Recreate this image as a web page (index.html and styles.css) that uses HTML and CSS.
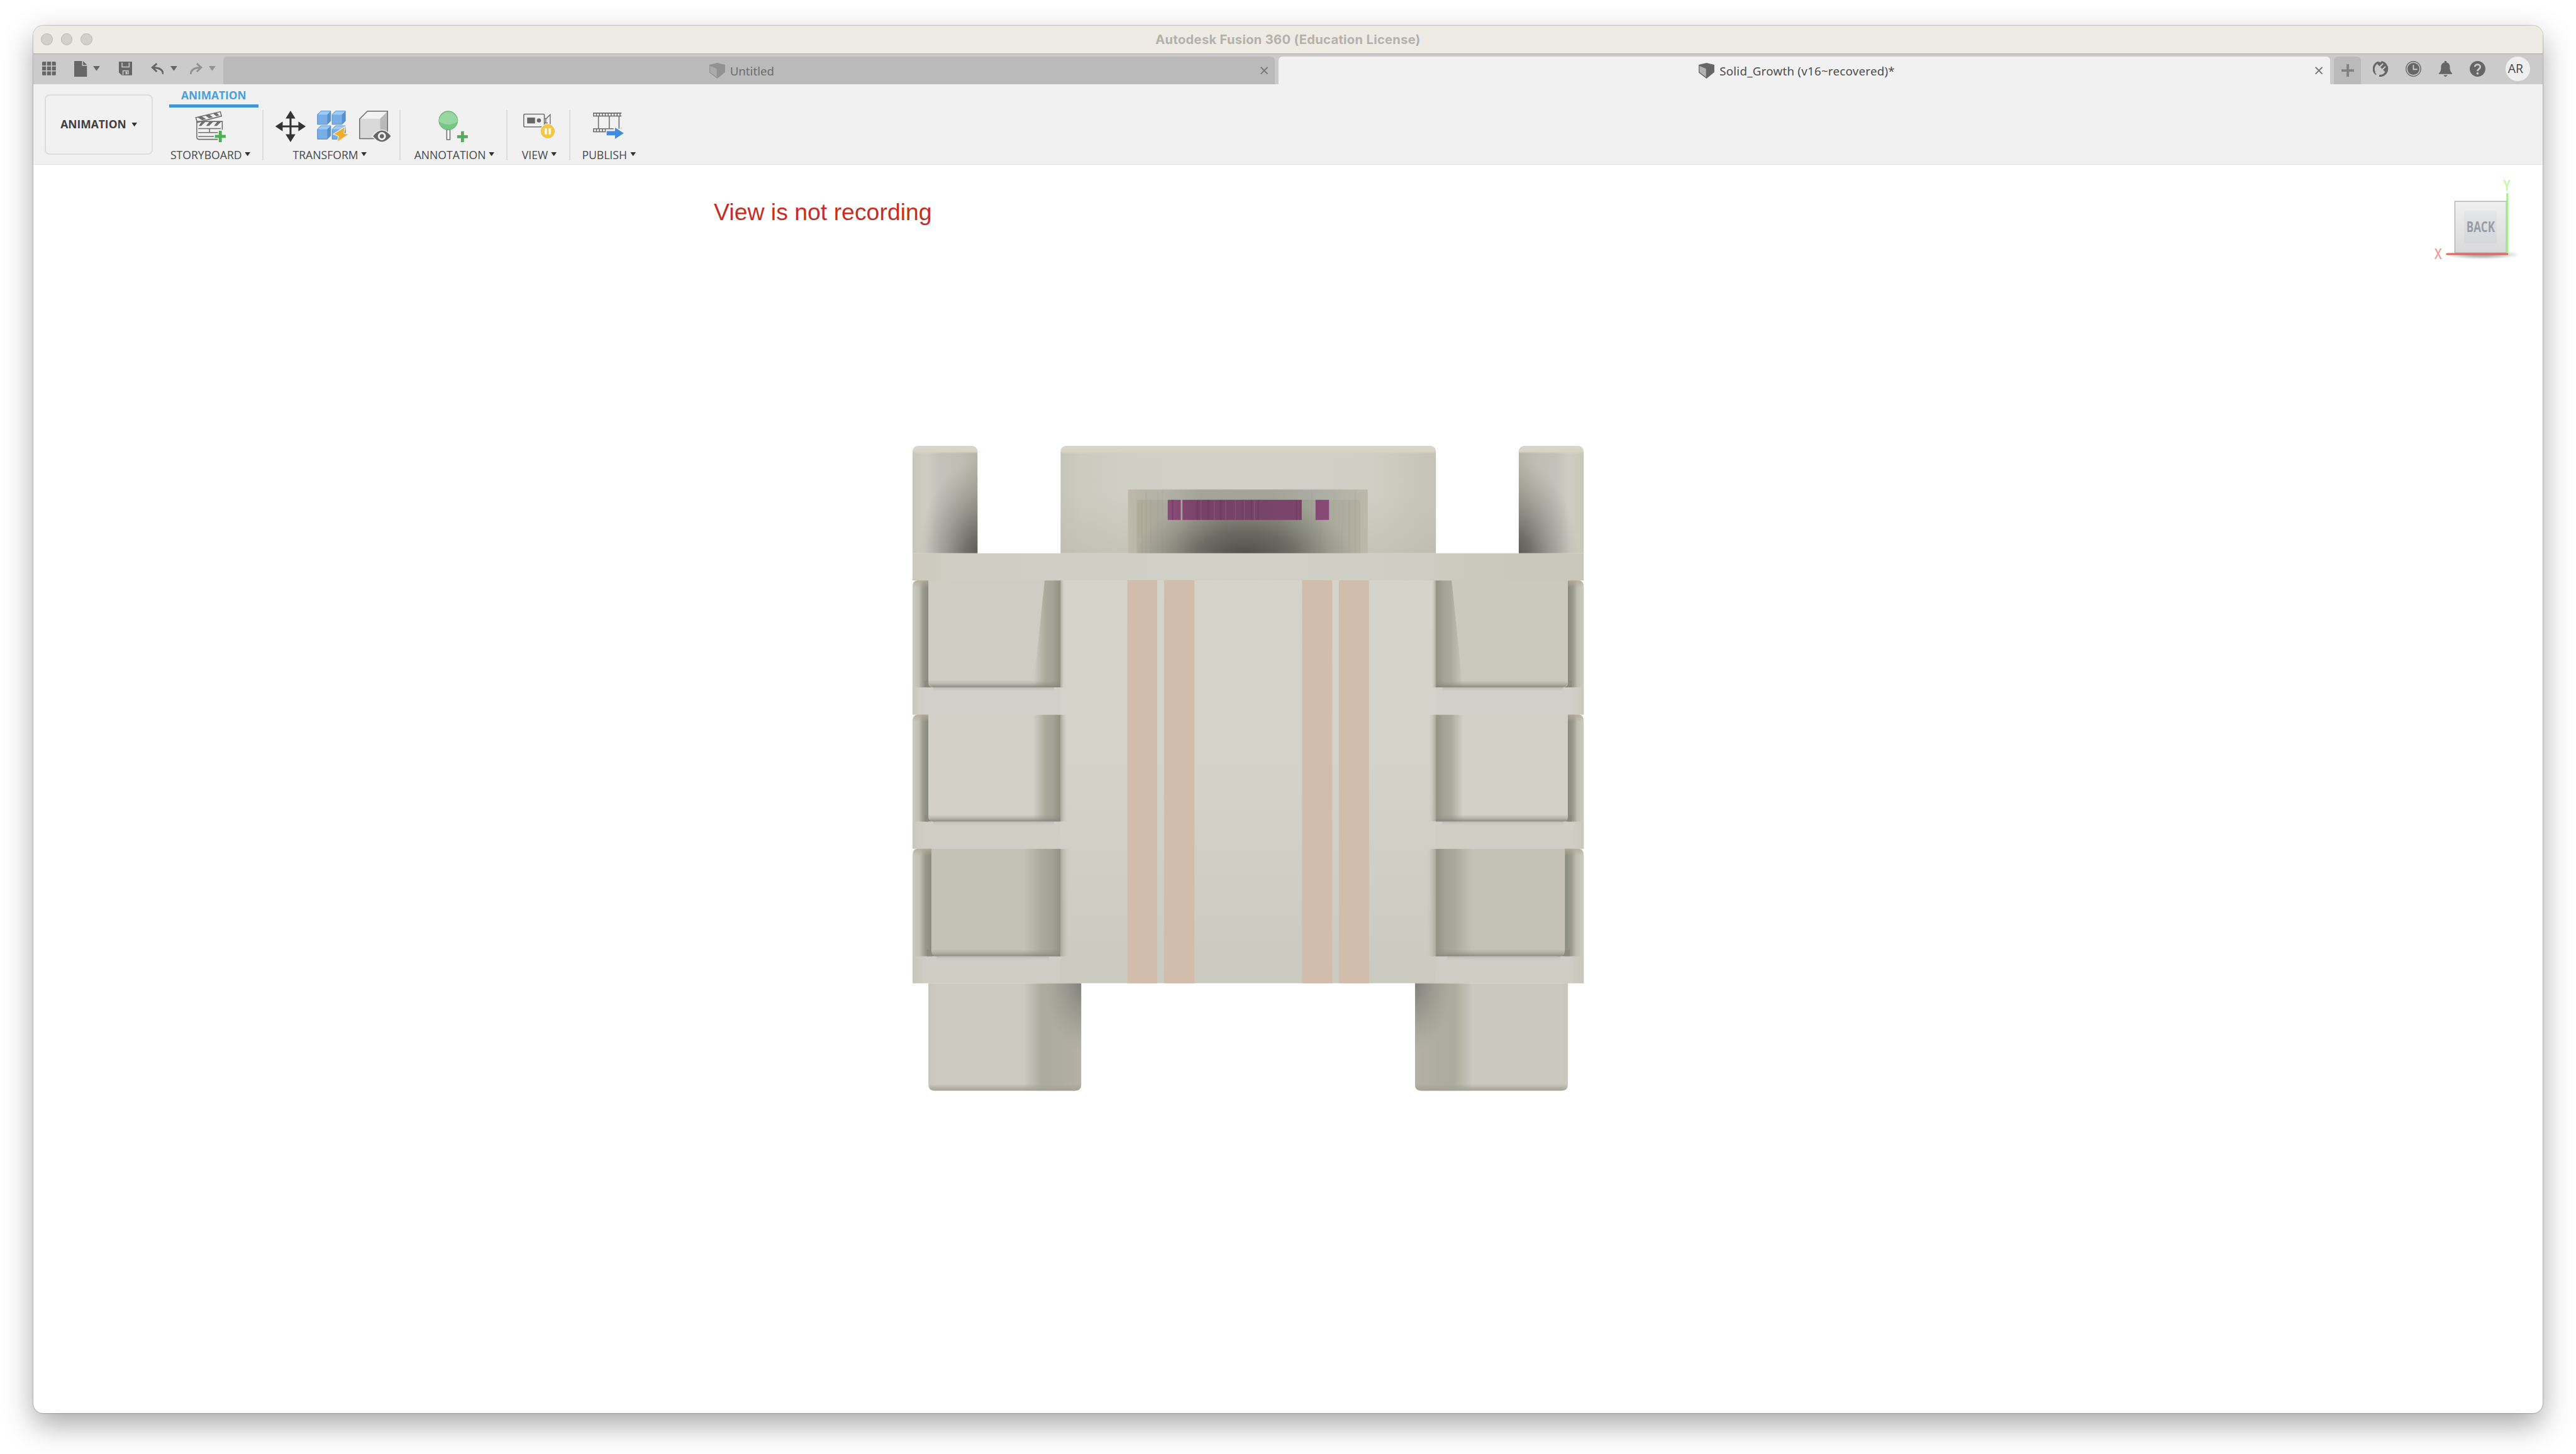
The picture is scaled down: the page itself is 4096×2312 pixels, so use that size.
FILE: index.html
```html
<!DOCTYPE html>
<html lang="en">
<head>
<meta charset="utf-8">
<title>Autodesk Fusion 360 (Education License)</title>
<link rel="stylesheet" href="styles.css">
</head>
<body>
<svg class="defs" aria-hidden="true">
  <symbol id="caret" viewBox="0 0 14 10"><path d="M0 0H14L7 10Z" fill="currentColor"/></symbol>
  <symbol id="close" viewBox="0 0 16 16"><path d="M1 1L15 15M15 1L1 15" stroke="currentColor" stroke-width="2.4" fill="none"/></symbol>
  <symbol id="doc-cube" viewBox="0 0 32 32">
    <path d="M0 4L16 0L32 4V19L16 32L0 20Z" fill="var(--cube-dark)"/>
    <path d="M1.5 6L15 12V29L1.5 19Z" fill="var(--cube-light)"/>
  </symbol>
</svg>

<main class="window">
  <header class="titlebar">
    <div class="lights"><i></i><i></i><i></i></div>
    <h1>Autodesk Fusion 360 (Education License)</h1>
  </header>

  <nav class="appbar">
    <div class="quick">
      <svg class="q-grid" viewBox="0 0 28 28"><path fill="currentColor" d="M0 2Q0 0 2 0H8V8H0ZM10 0H18V8H10ZM20 0H26Q28 0 28 2V8H20ZM0 10H8V18H0ZM10 10H18V18H10ZM20 10H28V18H20ZM0 20H8V28H2Q0 28 0 26ZM10 20H18V28H10ZM20 20H28V26Q28 28 26 28H20Z"/></svg>
      <svg class="q-doc" viewBox="0 0 26 32"><path fill="currentColor" d="M1 0H16V10H26V31Q26 32 25 32H1Q0 32 0 31V1Q0 0 1 0ZM18 0L26 8H18Z"/></svg>
      <svg class="q-caret near" viewBox="0 0 14 10"><use href="#caret"/></svg>
      <svg class="q-save" viewBox="0 0 28 28"><path fill="currentColor" fill-rule="evenodd" d="M1 0H27Q28 0 28 1V27Q28 28 27 28H6L0 22V1Q0 0 1 0ZM5.5 2V12H22V2H20V10H7.500V2ZM7.500 28V17.500H20V26H18V19.500H9.500V26Z"/><path d="M13.500 20H17V26H13.500Z" fill="#cbcbcb"/></svg>
      <svg class="q-undo" viewBox="0 0 26 24"><path d="M25 24C25 14 18 9.500 4 9.500M12 1.500L3 9.500L12 18" fill="none" stroke="currentColor" stroke-width="3.800"/></svg>
      <svg class="q-caret mid" viewBox="0 0 14 10"><use href="#caret"/></svg>
      <svg class="q-redo" viewBox="0 0 26 24"><path d="M1.500 24C1.500 14 8 9.500 22 9.500M14 1.500L23 9.500L14 18" fill="none" stroke="currentColor" stroke-width="3.800"/></svg>
      <svg class="q-caret near faded" viewBox="0 0 14 10"><use href="#caret"/></svg>
    </div>
    <div class="tab">
      <div class="tab-name"><svg class="cube" viewBox="0 0 32 32"><use href="#doc-cube"/></svg><span>Untitled</span></div>
      <svg class="close" viewBox="0 0 16 16"><use href="#close"/></svg>
    </div>
    <div class="tab active">
      <div class="tab-name"><svg class="cube" viewBox="0 0 32 32"><use href="#doc-cube"/></svg><span>Solid_Growth (v16~recovered)*</span></div>
      <svg class="close" viewBox="0 0 16 16"><use href="#close"/></svg>
    </div>
    <div class="new-tab"><svg viewBox="0 0 26 26"><path d="M0 13H26M13 0V26" stroke="currentColor" stroke-width="5"/></svg></div>
    <div class="status">
      <svg viewBox="0 0 32 32"><path d="M17 2A14 14 0 0 1 13 30M7 27A14 14 0 0 1 12 2.500" fill="none" stroke="currentColor" stroke-width="4"/><path d="M12 2L24 3L31 12L30 20L25 24L8 8Z" fill="currentColor"/><path d="M9 8L23 22C19 25 14 25 11 23L7 25L6 23L8 20C6 16 7 12 9 8ZM15 11L20 6M20 17L25 12" fill="#cbcbcb" stroke="#cbcbcb" stroke-width="2.600" stroke-linecap="round"/></svg>
      <svg viewBox="0 0 32 32"><circle cx="16" cy="16" r="15" fill="none" stroke="currentColor" stroke-width="1.800"/><circle cx="16" cy="16" r="12.300" fill="currentColor"/><path d="M16 8V17H24" fill="none" stroke="#cbcbcb" stroke-width="2.400"/></svg>
      <svg viewBox="0 0 32 32"><path fill="currentColor" d="M14 0H18V3C23 4 25 8 25 12C25 19 26 22 29.500 25V26.500H2.500V25C6 22 7 19 7 12C7 8 9 4 14 3ZM12 29H20Q19 32 16 32T12 29Z"/></svg>
      <svg viewBox="0 0 32 32"><circle cx="16" cy="16" r="16" fill="currentColor"/><path d="M10.500 12C10.500 5.500 21.500 5.500 21.500 12C21.500 16.500 16 16 16 21" fill="none" stroke="#cbcbcb" stroke-width="3.400"/><circle cx="16" cy="25.500" r="2.300" fill="#cbcbcb"/></svg>
      <span class="avatar">AR</span>
    </div>
  </nav>

  <section class="ribbon">
    <button class="workspace">ANIMATION<svg class="menu" viewBox="0 0 14 10"><use href="#caret"/></svg></button>
    <div class="panel storyboard">
      <div class="ribbon-tab">ANIMATION</div>
      <div class="tools"><svg class="tool" viewBox="0 0 64 64">
        <path d="M3 14L53 2L55.500 11L6 24Z" fill="#f1f1f1" stroke="#6e6e6e" stroke-width="2"/>
        <path d="M6 13L14 11L24 17L16 19.500ZM22 9.500L30 7.500L38 13.500L30 15.500ZM38 5.500L45 4L51 9.500L45 11.500Z" fill="#6e6e6e"/>
        <path d="M57 39V22H5V54Q5 58.500 9.500 58.500H48" fill="none" stroke="#6e6e6e" stroke-width="2"/>
        <path d="M15 22L9 31L14 31L23 22ZM31 22L24 31L30 31L39 22ZM47 22L40 31L46 31L55 22Z" fill="#6e6e6e"/>
        <path d="M8 36.500H54M8 44.500H48M8 52.500H40M31 36V45" stroke="#6e6e6e" stroke-width="2"/>
        <path d="M53 41V64M42 52.500H64" stroke="#4fae56" stroke-width="6"/></svg></div>
      <div class="label">STORYBOARD<svg class="menu" viewBox="0 0 14 10"><use href="#caret"/></svg></div>
    </div>
    <div class="panel transform">
      <div class="tools">
        <svg class="tool move" viewBox="0 0 64 64"><path fill="#333" d="M32 0L42 16H34V30H48V22L63 32L48 42V34H34V48H42L32 64L22 48H30V34H16V42L1 32L16 22V30H30V16H22Z"/></svg>
        <svg class="tool" viewBox="0 0 64 64">
          <g id="block" stroke-width="1"><path d="M1 8L8 0.800H28V21L21 28H1Z" fill="#78aee5" stroke="#3f78b5"/><path d="M1.500 8L8.500 1.300H27.500L21 8Z" fill="#9bccf8"/><path d="M21 8L27.500 1.500V21L21 27.500Z" fill="#568fc9"/></g>
          <use href="#block" x="30"/><use href="#block" y="30"/><use href="#block" x="30" y="30"/>
          <path d="M58 32L33 48L44 52L41 64L65 48L55 46Z" fill="#f2ab2d" stroke="#f1f1f1" stroke-width="1.500"/></svg>
        <svg class="tool" viewBox="0 0 64 64"><path d="M1 17L17 1H58V43L44 57H1Z" fill="#d9d9d9"/><path d="M2.500 16.500L17.500 2H57L43 16.500Z" fill="#f3f3f3"/><path d="M43 16.500L57 2.500V57H43Z" fill="#b9b9b9"/><path d="M1 17L17 1H58V57H1Z" fill="none" stroke="#6e6e6e" stroke-width="2"/><path d="M50 44H60V60H50Z" fill="#f1f1f1"/>
          <path d="M27 52Q46.500 27 66 52Q46.500 77 27 52Z" fill="#666" stroke="#f1f1f1" stroke-width="2"/><circle cx="46.500" cy="52" r="6.300" fill="#666" stroke="#f1f1f1" stroke-width="4"/></svg>
      </div>
      <div class="label">TRANSFORM<svg class="menu" viewBox="0 0 14 10"><use href="#caret"/></svg></div>
    </div>
    <div class="panel annotation">
      <div class="tools"><svg class="tool" viewBox="0 0 64 64"><path d="M18.500 38H25V59H18.500Z" fill="#fff" stroke="#6e6e6e" stroke-width="2"/><circle cx="21.500" cy="20" r="19.300" fill="#78c684" stroke="#5fa96b"/><path d="M2.500 22A19 19 0 1 1 40.500 22Q22 34 2.500 22Z" fill="#97d8a2"/><path d="M50.500 42V64M39.500 53H61.500" stroke="#4fae56" stroke-width="6"/></svg></div>
      <div class="label">ANNOTATION<svg class="menu" viewBox="0 0 14 10"><use href="#caret"/></svg></div>
    </div>
    <div class="panel view">
      <div class="tools"><svg class="tool" viewBox="0 0 64 64"><rect x="1" y="7" width="42" height="26" rx="2" fill="#f1f1f1" stroke="#6e6e6e" stroke-width="2"/><rect x="8" y="14" width="16" height="12" fill="#666"/><circle cx="32" cy="20" r="4.200" fill="#666"/><path d="M43 16H47L55 8V34M43 25H50M46 16V25" fill="none" stroke="#6e6e6e" stroke-width="1.800"/><circle cx="50" cy="42" r="15.500" fill="#f1f1f1"/><circle cx="50" cy="42" r="13.700" fill="#f8c840" stroke="#e5b63a"/><path d="M46 36V48M54 36V48" stroke="#fff" stroke-width="4.200"/></svg></div>
      <div class="label">VIEW<svg class="menu" viewBox="0 0 14 10"><use href="#caret"/></svg></div>
    </div>
    <div class="panel publish">
      <div class="tools"><svg class="tool" viewBox="0 0 64 64"><path d="M0 5H58M0 11H58M0 37H42M0 43H26M1 4V12M1 36V44M57 36H58M11 12V37M33 12V37M53 12V37" fill="none" stroke="#6e6e6e" stroke-width="2"/><path d="M7 4V12M13 4V12M19 4V12M25 4V12M31 4V12M37 4V12M43 4V12M49 4V12M55 4V12M7 36V44M13 36V44M19 36V44M25 36V44" stroke="#6e6e6e" stroke-width="2"/><path d="M27 41H44V33L64 46L44 59V51H27Z" fill="#4289e0" stroke="#f1f1f1" stroke-width="1.500"/></svg></div>
      <div class="label">PUBLISH<svg class="menu" viewBox="0 0 14 10"><use href="#caret"/></svg></div>
    </div>
  </section>

  <section class="viewport">
    <p class="notice">View is not recording</p>

    <svg class="model" viewBox="1850 900 1392 1340">
      <defs>
        <linearGradient id="bodyV" x2="0" y2="1"><stop offset="0" stop-color="#d4d4cb"/><stop offset=".45" stop-color="#d3d3ca"/><stop offset="1" stop-color="#cbcac1"/></linearGradient>
        <linearGradient id="edge"><stop offset="0" stop-color="#c9c7b9"/><stop offset="1" stop-color="#c9c7b9" stop-opacity="0"/></linearGradient>
        <linearGradient id="topLip" x2="0" y2="1"><stop offset="0" stop-color="#d9d6c8"/><stop offset=".7" stop-color="#d6d4c7"/><stop offset="1" stop-color="#d6d4c7" stop-opacity="0"/></linearGradient>
        <linearGradient id="pillar"><stop offset="0" stop-color="#c7c7b9"/><stop offset=".22" stop-color="#cdcdc4"/><stop offset=".42" stop-color="#c2c2ba"/><stop offset=".75" stop-color="#bfbeb4"/><stop offset="1" stop-color="#b5b3a6"/></linearGradient>
        <radialGradient id="pillarDark" gradientUnits="userSpaceOnUse" cx="0" cy="0" r="1" gradientTransform="translate(2004 1150) scale(132 215)"><stop offset="0" stop-color="#504e4b"/><stop offset=".3" stop-color="#5c5b56" stop-opacity=".78"/><stop offset=".6" stop-color="#6c6b64" stop-opacity=".42"/><stop offset="1" stop-color="#84847b" stop-opacity="0"/></radialGradient>
        <linearGradient id="cabin"><stop offset="0" stop-color="#c5c5b9"/><stop offset=".05" stop-color="#cdcabf"/><stop offset=".16" stop-color="#cfcfc5"/><stop offset=".5" stop-color="#d0d0c7"/><stop offset=".83" stop-color="#cfcfc5"/><stop offset=".95" stop-color="#c8c6b9"/><stop offset="1" stop-color="#c6c4b6"/></linearGradient>
        <linearGradient id="cabinV" x2="0" y2="1"><stop offset=".4" stop-color="#b9b8aa" stop-opacity="0"/><stop offset="1" stop-color="#b9b8aa" stop-opacity=".5"/></linearGradient>
        <linearGradient id="recess"><stop offset="0" stop-color="#bdbaab"/><stop offset=".07" stop-color="#b5b4a5"/><stop offset=".16" stop-color="#b2b2a8"/><stop offset=".3" stop-color="#a3a49a"/><stop offset=".6" stop-color="#a2a399"/><stop offset=".8" stop-color="#acada4"/><stop offset=".93" stop-color="#b5b5a7"/><stop offset="1" stop-color="#bcb9aa"/></linearGradient>
        <linearGradient id="recessIn"><stop offset="0" stop-color="#aeaa9a"/><stop offset=".2" stop-color="#a3a396"/><stop offset=".4" stop-color="#8a8b80"/><stop offset=".62" stop-color="#8a8b80"/><stop offset=".85" stop-color="#a7a89a"/><stop offset="1" stop-color="#b1ad9d"/></linearGradient>
        <radialGradient id="recessDark" gradientUnits="userSpaceOnUse" cx="0" cy="0" r="1" gradientTransform="translate(2538 1138) scale(225 125)"><stop offset="0" stop-color="#4c4c46"/><stop offset=".45" stop-color="#5c5c54" stop-opacity=".72"/><stop offset=".75" stop-color="#6a6a61" stop-opacity=".3"/><stop offset="1" stop-color="#77776e" stop-opacity="0"/></radialGradient>
        <linearGradient id="violet"><stop offset="0" stop-color="#8a4c79"/><stop offset=".2" stop-color="#784265"/><stop offset=".5" stop-color="#744466"/><stop offset=".8" stop-color="#7c456b"/><stop offset="1" stop-color="#8a4a79"/></linearGradient>
        <linearGradient id="plate"><stop offset="0" stop-color="#ccc9bb"/><stop offset=".06" stop-color="#cecec4"/><stop offset=".5" stop-color="#d0d0c6"/><stop offset=".76" stop-color="#cfcec5"/><stop offset=".82" stop-color="#cbc9bc"/><stop offset="1" stop-color="#c9c7ba"/></linearGradient>
        <linearGradient id="rail"><stop offset="0" stop-color="#cbcbc0"/><stop offset=".4" stop-color="#bebeb2"/><stop offset=".65" stop-color="#9b9b8e"/><stop offset="1" stop-color="#898a7e"/></linearGradient>
        <linearGradient id="railTop" x2="0" y2="1"><stop offset="0" stop-color="#b5ac99" stop-opacity=".8"/><stop offset="1" stop-color="#b5ac99" stop-opacity="0"/></linearGradient>
        <linearGradient id="side" gradientUnits="userSpaceOnUse" x1="2108" x2="2163"><stop offset="0" stop-color="#a7a899" stop-opacity="0"/><stop offset=".45" stop-color="#a9aa9b"/><stop offset=".72" stop-color="#a3a396"/><stop offset="1" stop-color="#929184"/></linearGradient>
        <linearGradient id="sideWide" gradientUnits="userSpaceOnUse" x1="2088" x2="2163"><stop offset="0" stop-color="#a9aa9b" stop-opacity="0"/><stop offset=".5" stop-color="#a9aa9b"/><stop offset=".75" stop-color="#a3a396"/><stop offset="1" stop-color="#919185"/></linearGradient>
        <linearGradient id="spill"><stop offset="0" stop-color="#aaa598"/><stop offset="1" stop-color="#cfcec4" stop-opacity="0"/></linearGradient>
        <linearGradient id="foot" x2="0" y2="1"><stop offset="0" stop-color="#8d8a82" stop-opacity="0"/><stop offset=".5" stop-color="#8d8a82" stop-opacity=".35"/><stop offset="1" stop-color="#85827a" stop-opacity=".9"/></linearGradient>
        <linearGradient id="under" x2="0" y2="1"><stop offset="0" stop-color="#aaa69c" stop-opacity=".5"/><stop offset="1" stop-color="#c7c5bb" stop-opacity="0"/></linearGradient>
        <linearGradient id="legSide" gradientUnits="userSpaceOnUse" x1="2088" x2="2206"><stop offset="0" stop-color="#abac9d" stop-opacity="0"/><stop offset=".32" stop-color="#abac9d"/><stop offset=".6" stop-color="#aeac9f"/><stop offset="1" stop-color="#b5b2a5"/></linearGradient>
        <radialGradient id="legDark" gradientUnits="userSpaceOnUse" cx="0" cy="0" r="1" gradientTransform="translate(2212 1995) scale(80 150)"><stop offset="0" stop-color="#777773"/><stop offset=".5" stop-color="#85847d" stop-opacity=".5"/><stop offset="1" stop-color="#8f8e86" stop-opacity="0"/></radialGradient>
        <linearGradient id="legFoot" x2="0" y2="1"><stop offset="0" stop-color="#a3a297" stop-opacity="0"/><stop offset="1" stop-color="#a3a297"/></linearGradient>
        <g id="half">
          <path d="M1861.500 1128V923Q1861.500 909 1875.500 909H1980Q1994 909 1994 923V1128Z" fill="url(#pillar)"/>
          <path d="M1870 923H1994V1128H1870Z" fill="url(#pillarDark)"/>
          <path d="M1861.500 925V923Q1861.500 909 1875.500 909H1980Q1994 909 1994 923V925Z" fill="url(#topLip)"/>
          <path d="M1894 2005H2205.500V2212Q2205.500 2224 2193.500 2224H1906Q1894 2224 1894 2212Z" fill="var(--leg)"/>
          <path d="M2088 2005H2205.500V2212Q2205.500 2224 2193.500 2224H2088Z" fill="url(#legSide)"/>
          <path d="M2120 2005H2205.500V2150H2120Z" fill="url(#legDark)"/>
          <rect x="1894" y="2005" width="16" height="206" fill="url(#edge)"/>
          <path d="M1894 2210H2205.500V2212Q2205.500 2224 2193.500 2224H1906Q1894 2224 1894 2212Z" fill="url(#legFoot)"/>
        </g>
        <g id="bays">
          <path d="M1880 1401.500H2163V1457.500H1880ZM1880 1675H2163V1731H1880ZM1880 1950H2163V2005H1880Z" fill="#cfccc4" opacity=".65"/>
          <path d="M1861.500 1401.500H1885V1457.500H1861.500ZM1861.500 1675H1885V1731H1861.500ZM1861.500 1950H1885V2005H1861.500Z" fill="url(#edge)"/>
          <g id="railPart"><path d="M1861.500 1183.500H1894V1401.500H1861.500Z" fill="url(#rail)"/><rect x="1861.500" y="1183.500" width="32.500" height="14" fill="url(#railTop)"/><path d="M1860 1183.500H1871Q1861.500 1184 1861.500 1196H1860Z" fill="#fff"/></g>
          <use href="#railPart" y="274"/>
          <g><path d="M1861.500 1731H1900V1950H1861.500Z" fill="url(#rail)"/><rect x="1861.500" y="1731" width="39" height="14" fill="url(#railTop)"/><path d="M1860 1731H1871Q1861.500 1731.500 1861.500 1743.500H1860Z" fill="#fff"/></g>
          <path d="M1886 1388H1910V1401.500H1886ZM1886 1661.500H1910V1675H1886ZM1890 1936.500H1916V1950H1890Z" fill="#8b8a7f"/>
          <path d="M1894 1183.500H2163V1401.500H1904Q1894 1401.500 1894 1391.500Z" fill="var(--face1)"/>
          <path d="M1894 1457.500H2163V1675H1904Q1894 1675 1894 1665Z" fill="var(--face2)"/>
          <path d="M1900 1731H2163V1950H1912Q1900 1950 1900 1938Z" fill="var(--face3)"/>
          <path d="M2131 1183.500H2163V1401.500H2108Z" fill="url(#side)"/>
          <rect x="2108" y="1457.500" width="55" height="217.500" fill="url(#side)"/>
          <rect x="2088" y="1731" width="75" height="219" fill="url(#sideWide)"/>
          <path d="M1895 1387H2163V1401.500H1904Q1896 1401 1895 1394Z" fill="url(#foot)"/>
          <path d="M1895 1661H2163V1675H1904Q1896 1674.500 1895 1668Z" fill="url(#foot)"/>
          <path d="M1901 1936H2163V1950H1911Q1903 1949.500 1901 1942Z" fill="url(#foot)"/>
          <rect x="1904" y="1401.500" width="246" height="9" fill="url(#under)"/>
          <rect x="1904" y="1675" width="246" height="9" fill="url(#under)"/>
          <rect x="1910" y="1950" width="230" height="9" fill="url(#under)"/>
          <rect x="2163" y="1183.500" width="9" height="218" fill="url(#spill)"/>
          <rect x="2163" y="1457.500" width="15" height="217.500" fill="url(#spill)"/>
          <rect x="2163" y="1731" width="20" height="219" fill="url(#spill)"/>
        </g>
      </defs>
      <use class="left" href="#half"/>
      <use class="right" href="#half" transform="translate(5092 0) scale(-1 1)"/>
      <path d="M2163.500 1128V923Q2163.500 909 2177.500 909H2915Q2929 909 2929 923V1128Z" fill="url(#cabin)"/>
      <rect x="2163.500" y="925" width="765.500" height="203" fill="url(#cabinV)"/>
      <path d="M2163.500 925V923Q2163.500 909 2177.500 909H2915Q2929 909 2929 923V925Z" fill="url(#topLip)"/>
      <rect x="2301" y="998" width="489" height="130" fill="url(#recess)"/>
      <rect x="2319" y="1019" width="456" height="109" fill="url(#recessIn)" opacity=".75"/>
      <rect x="2301" y="1019" width="489" height="109" fill="url(#recessDark)"/>
      <path d="M2330 1019V1128M2338 1000V1128M2348 1019V1128M2362 1000V1128M2371 1000V1128M2455 1062V1128M2676 1000V1128M2694 1062V1128M2738 1019V1128M2752 1019V1128M2765 1000V1128" stroke="#8f8d80" stroke-opacity=".13" stroke-width="2"/>
      <rect x="2408" y="1019" width="4.500" height="41" fill="#a5a49b"/>
      <path d="M2382 1019H2408.500V1060H2382ZM2412 1019H2655.500V1060H2412ZM2683.500 1019H2711V1060H2683.500Z" fill="url(#violet)"/>
      <path d="M2392 1019V1060M2443 1019V1060M2465 1019V1060M2490 1019V1060M2536 1019V1060M2553 1019V1060M2567 1019V1060M2645 1019V1060M2652 1019V1060" stroke="#6a3758" stroke-opacity=".45" stroke-width="3"/>
      <path d="M2450 1019V1060M2477 1019V1060M2500 1019V1060M2520 1019V1060M2538 1019V1060M2559 1019V1060" stroke="#985c88" stroke-opacity=".5" stroke-width="2"/>
      <rect x="1861.500" y="1183" width="1369" height="822" fill="url(#bodyV)"/>
      <rect x="1861.500" y="1128" width="1369" height="55.500" fill="url(#plate)"/>
      <use class="left" href="#bays"/>
      <use class="right" href="#bays" transform="translate(5092 0) scale(-1 1)"/>
      <path d="M2299.500 1183H2360.500V2005H2299.500ZM2374.500 1183H2436.500V2005H2374.500ZM2656 1183H2717.500V2005H2656ZM2731 1183H2792.500V2005H2731Z" fill="#d2bdac"/>
    </svg>

    <svg class="viewcube" viewBox="4950 350 210 200">
      <defs>
        <linearGradient id="vc" x2="0" y2="1"><stop offset="0" stop-color="#f0f0f0"/><stop offset="1" stop-color="#d9d9d9"/></linearGradient>
        <linearGradient id="vcIn" x2="0" y2="1"><stop offset="0" stop-color="#e4e5e8"/><stop offset="1" stop-color="#d5d6d9"/></linearGradient>
        <radialGradient id="vcShadow"><stop offset=".3" stop-color="#000" stop-opacity=".32"/><stop offset="1" stop-color="#000" stop-opacity="0"/></radialGradient>
      </defs>
      <ellipse cx="5062" cy="519" rx="78" ry="10" fill="url(#vcShadow)"/>
      <rect x="5007" y="410.500" width="105" height="105" fill="url(#vc)" stroke="#b0b0b0" stroke-width="1.800"/>
      <rect x="5026" y="430" width="66" height="66" fill="url(#vcIn)"/>
      <text x="5030.500" y="473.500" class="vc-face" textLength="58" lengthAdjust="spacingAndGlyphs">BACK</text>
      <path d="M5114 394V518" stroke="#94fb7c" stroke-width="4"/>
      <path d="M4991 518H5114" stroke="#e3655d" stroke-width="4" stroke-linecap="round"/>
      <text x="5106" y="388" class="vc-y" textLength="14" lengthAdjust="spacingAndGlyphs">Y</text>
      <text x="4965.500" y="528" class="vc-x" textLength="15" lengthAdjust="spacingAndGlyphs">X</text>
    </svg>
  </section>
</main>
</body>
</html>
```
FILE: styles.css
```css
/* 1rem = 10 design pixels */
html { font-size: 7.7959px; background: #fff; }
* { box-sizing: border-box; }
body { margin: 0; padding: 5.2rem 6.8rem 0; height: 100vh; overflow: hidden; font-family: "Open Sans", "Noto Sans", sans-serif; color: #444; }
svg { display: block; flex: none; }
.defs { position: absolute; width: 0; height: 0; }

.window { height: 283rem; border-radius: 2rem; background: #fff; display: flex; flex-direction: column;
  box-shadow: 0 0 0 .15rem rgba(0,0,0,.16), 0 2.4rem 6rem rgba(0,0,0,.34); }

.titlebar { flex: none; height: 5.8rem; display: grid; grid-template-columns: 20rem 1fr 20rem; align-items: center; padding-left: 1.6rem; padding-right: 1.6rem; border-radius: 2rem 2rem 0 0; background: #eeebe5; border-bottom: .25rem solid #acacaa; }
.titlebar h1 { margin: 0; text-align: center; font: 700 2.58rem/1 Inter, sans-serif; letter-spacing: .016em; color: #b4b0aa; }
.lights { display: flex; gap: 1.6rem; }
.lights i { width: 2.4rem; height: 2.4rem; border-radius: 50%; background: #d3d0ca; border: .2rem solid #bcb9b3; }

.appbar { flex: none; height: 6.2rem; display: flex; background: #cbcbcb; color: #666; }
.quick { width: 38.8rem; padding-left: 1.8rem; display: flex; align-items: center; height: 6rem; }
.quick .q-grid { width: 2.8rem; height: 2.8rem; }
.quick .q-doc { width: 2.6rem; height: 3.2rem; margin-left: 3.8rem; }
.quick .q-caret { width: 1.4rem; height: 1rem; }
.quick .near { margin-left: 1.2rem; }
.quick .mid { margin-left: 1.4rem; }
.quick .q-save { width: 2.8rem; height: 2.8rem; margin-left: 3.8rem; }
.quick .q-undo { width: 2.6rem; height: 2.4rem; margin-left: 3.8rem; }
.quick .q-redo { width: 2.6rem; height: 2.4rem; margin-left: 2.6rem; color: #929292; }
.quick .faded { color: #929292; }
.tab { --cube-dark: #929292; --cube-light: #aaacab; align-self: flex-end; width: 214.4rem; height: 5.6rem; margin-right: .8rem; padding-right: 1.4rem; display: flex; align-items: center; border-radius: .8rem .8rem 0 0; background: #bababa; font-family: "Noto Sans", "Open Sans", sans-serif; font-size: 2.4rem; color: #6c6c6c; }
.tab.active { --cube-dark: #666; --cube-light: #b0b3b2; background: #f1f1f1; color: #4c4c4c; }
.tab.active span { letter-spacing: .014em; }
.tab-name { flex: 1; display: flex; justify-content: center; align-items: center; gap: 1rem; line-height: 1; }
.tab-name span { padding-top: .2rem; }
.cube { width: 3.2rem; height: 3.2rem; }
.close { width: 1.6rem; height: 1.6rem; color: #777; }
.new-tab { align-self: flex-end; width: 5.6rem; height: 5.6rem; border-radius: .8rem .8rem 0 0; background: #bababa; color: #818181; display: grid; place-items: center; }
.new-tab svg { width: 2.6rem; height: 2.6rem; }
.status { display: flex; align-items: center; gap: 3.4rem; height: 6rem; margin-left: 2.4rem; }
.status svg { width: 3.2rem; height: 3.2rem; }
.avatar { width: 5rem; height: 5rem; margin-left: .7rem; padding-right: 1rem; border-radius: 50%; background: #efefef; display: grid; place-items: center; font-size: 2.5rem; line-height: 1; color: #444; }

.ribbon { flex: none; height: 16.4rem; display: flex; background: #f1f1f1; border-bottom: .25rem solid #e2e2e2; }
.workspace { width: 22.1rem; height: 12.4rem; margin: 2rem 1rem 0 2.3rem; padding: 0; display: flex; justify-content: center; align-items: center; gap: 1rem; border: .27rem solid #dcdcdc; border-radius: 1rem; background: none; font: 700 2.24rem/1 "Open Sans", sans-serif; color: #3f3f3f; }
.menu { width: 1.2rem; height: .8rem; color: #333; }
.panel { position: relative; height: 100%; padding-top: 5.4rem; display: flex; flex-direction: column; align-items: center; }
.panel:not(:last-child)::after { content: ""; position: absolute; right: -.1rem; top: 5.3rem; height: 10.2rem; width: .25rem; background: #dcdcdc; }
.storyboard { width: 21.4rem; padding-top: 1.2rem; }
.transform { width: 28rem; }
.annotation { width: 21.8rem; }
.view { width: 12.8rem; }
.publish { width: 15.6rem; }
.ribbon-tab { width: 18.3rem; height: 3.6rem; text-align: center; font-weight: 700; font-size: 2.22rem; line-height: 2.4rem; color: #4a9fdd; border-bottom: .7rem solid #4394d6; margin-left: 1.4rem; }
.storyboard .tools { margin-top: .6rem; }
.tools { display: flex; gap: 2.2rem; height: 6.4rem; }
.tool { width: 6.4rem; height: 6.4rem; overflow: visible; }
.transform .tools { margin-left: .4rem; }
.view .tools, .publish .tools { margin-left: .3rem; }
.label { display: flex; align-items: center; gap: .6rem; margin-top: 1.3rem; margin-left: .4rem; font-size: 2.26rem; line-height: 2.6rem; color: #484848; }
.label .menu { margin-top: -.3rem; }
.storyboard .label { margin-left: .1rem; }
.transform .label { margin-left: -.6rem; }

.viewport { position: relative; flex: 1; }
.notice { position: absolute; left: 138.8rem; top: 6.9rem; margin: 0; font: 4.8rem/1.15 "Liberation Sans", Arial, sans-serif; color: #c52e24; white-space: nowrap; }
.model { position: absolute; left: 178.2rem; top: 56.4rem; width: 139.2rem; height: 134rem; }
.left { --face1: #cecdc4; --face2: #d3d0c8; --face3: #c4c2b7; --leg: #cdcac2; }
.right { --face1: #cac9bb; --face2: #d2cfc7; --face3: #c4c2b6; --leg: #cbc8c0; }
.viewcube { position: absolute; left: 488.2rem; top: 1.4rem; width: 21rem; height: 20rem; }
.vc-face { font: 700 30px "Open Sans", sans-serif; fill: #999ca3; }
.vc-y { font: 600 30px "Open Sans", sans-serif; fill: #b6fba6; }
.vc-x { font: 600 30px "Open Sans", sans-serif; fill: #f29a95; }
```
